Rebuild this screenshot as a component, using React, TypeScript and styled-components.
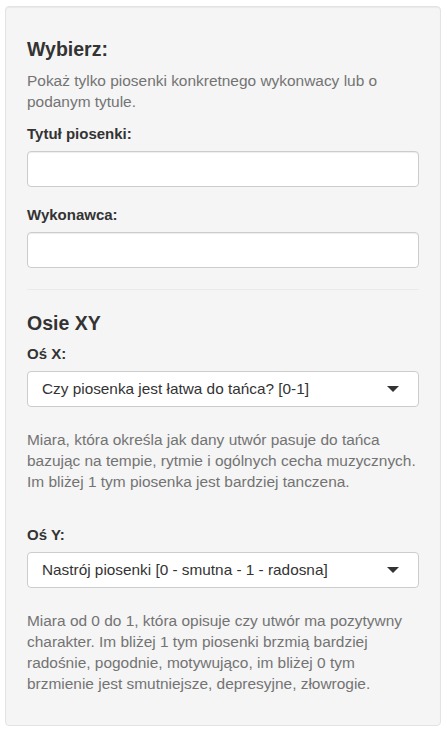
import styled, { createGlobalStyle } from 'styled-components';

const GlobalStyle = createGlobalStyle`
    body {
        margin: 0;
        background: #ffffff;
        font-family: 'Liberation Sans', Arial, sans-serif;
        font-size: 15px;
        color: #333333;
    }
`;

const Well = styled.div`
    margin: 6px 6px 8px 5px;
    padding: 30px 21px 31px;
    background-color: #f5f5f5;
    border: 1px solid #e3e3e3;
    border-radius: 4px;
    box-shadow: inset 0 1px 1px rgba(0, 0, 0, 0.05);
`;

const SectionTitle = styled.h3<{ $gap?: number }>`
    margin: ${(p) => p.$gap ?? 0}px 0 0;
    font-size: 19.5px;
    font-weight: 700;
    line-height: 24px;
    color: #333333;
`;

const HelpText = styled.p<{ $gap: number }>`
    margin: ${(p) => p.$gap}px 0 0;
    font-size: 15.45px;
    line-height: 21px;
    color: #737373;
`;

const Field = styled.div<{ $gap: number }>`
    margin-top: ${(p) => p.$gap}px;
    display: flex;
    flex-direction: column;
    gap: 7px;
`;

const FieldLabel = styled.label`
    font-size: 15px;
    font-weight: 700;
    line-height: 21px;
    color: #333333;
`;

const TextInput = styled.input`
    box-sizing: border-box;
    width: 100%;
    height: 36px;
    padding: 6px 12px;
    font: inherit;
    background: #ffffff;
    border: 1px solid #cccccc;
    border-radius: 4px;
    box-shadow: inset 0 1px 1px rgba(0, 0, 0, 0.075);
    outline: none;
`;

const SelectBox = styled.div`
    box-sizing: border-box;
    height: 36px;
    padding: 0 19px 0 14px;
    display: flex;
    align-items: center;
    justify-content: space-between;
    background: #ffffff;
    border: 1px solid #cccccc;
    border-radius: 4px;
    color: #333333;
    font-size: 15.35px;
`;

const Caret = styled.span`
    width: 0;
    height: 0;
    border-left: 6px solid transparent;
    border-right: 6px solid transparent;
    border-top: 6px solid #333333;
`;

const Divider = styled.hr`
    margin: 21px 0 0;
    border: 0;
    border-top: 1px solid #eaeaea;
`;

const Select = ({ value }: { value: string }) => (
    <SelectBox>
        <span>{value}</span>
        <Caret />
    </SelectBox>
);

const App = () => {
    return (
        <>
            <GlobalStyle />
            <Well>
                <SectionTitle>Wybierz:</SectionTitle>
                <HelpText $gap={9}>
                    Pokaż tylko piosenki konkretnego wykonwacy lub o podanym
                    tytule.
                </HelpText>
                <Field $gap={11}>
                    <FieldLabel>Tytuł piosenki:</FieldLabel>
                    <TextInput type="text" />
                </Field>
                <Field $gap={17}>
                    <FieldLabel>Wykonawca:</FieldLabel>
                    <TextInput type="text" />
                </Field>
                <Divider />
                <SectionTitle $gap={21}>Osie XY</SectionTitle>
                <Field $gap={8}>
                    <FieldLabel>Oś X:</FieldLabel>
                    <Select value="Czy piosenka jest łatwa do tańca? [0-1]" />
                </Field>
                <HelpText $gap={22}>
                    Miara, która określa jak dany utwór pasuje do tańca
                    bazując na tempie, rytmie i ogólnych cecha muzycznych. Im
                    bliżej 1 tym piosenka jest bardziej tanczena.
                </HelpText>
                <Field $gap={32}>
                    <FieldLabel>Oś Y:</FieldLabel>
                    <Select value="Nastrój piosenki [0 - smutna - 1 - radosna]" />
                </Field>
                <HelpText $gap={22}>
                    Miara od 0 do 1, która opisuje czy utwór ma pozytywny
                    charakter. Im bliżej 1 tym piosenki brzmią bardziej
                    radośnie, pogodnie, motywująco, im bliżej 0 tym brzmienie
                    jest smutniejsze, depresyjne, złowrogie.
                </HelpText>
            </Well>
        </>
    );
};

export default App;
